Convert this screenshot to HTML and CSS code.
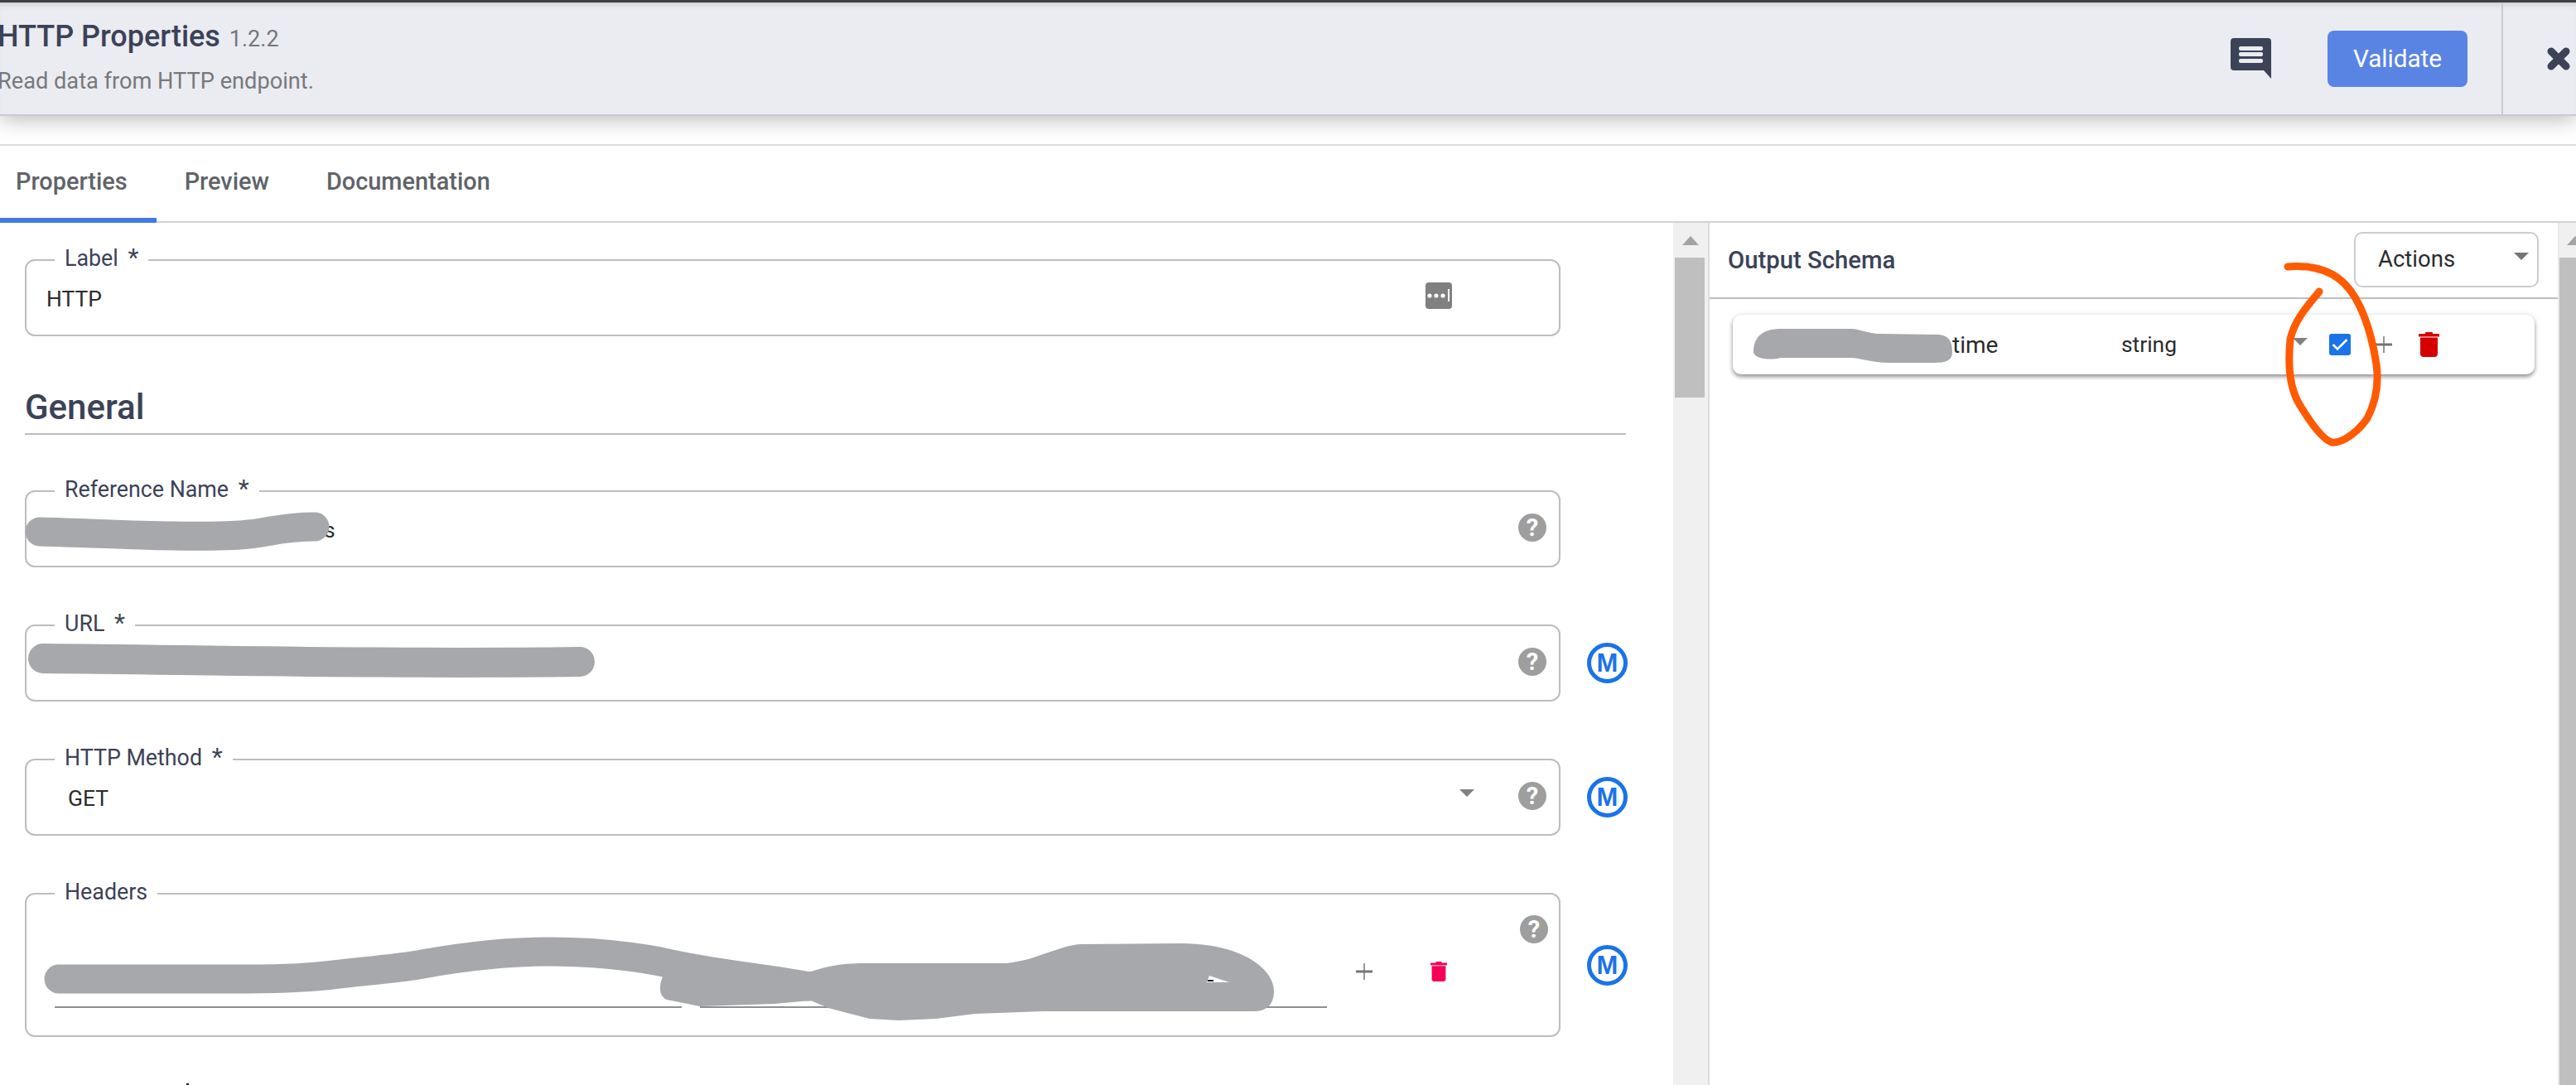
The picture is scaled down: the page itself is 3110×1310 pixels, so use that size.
FILE: index.html
```html
<!DOCTYPE html>
<html>
    <head>
        <title>HTTP Properties</title>
        <link rel="stylesheet" href="styles.css">
    </head>
    <body>
        <div class="header">
            <div class="header-title">
                <div class="title">HTTP Properties <span class="version">1.2.2</span></div>
                <div class="description">Read data from HTTP endpoint.</div>
            </div>
            <svg class="comment-icon" viewBox="0 0 49 49">
                <path d="M4 0H45a4 4 0 0 1 4 4V49L40 39H4a4 4 0 0 1-4-4V4a4 4 0 0 1 4-4z" fill="#3c4257"/>
                <rect x="10" y="10" width="29" height="5" rx="2" fill="#ebecf1"/>
                <rect x="10" y="17" width="29" height="5" rx="2" fill="#ebecf1"/>
                <rect x="10" y="25" width="29" height="5" rx="2" fill="#ebecf1"/>
            </svg>
            <button class="validate">Validate</button>
            <div class="header-divider"></div>
            <svg class="close-icon" viewBox="0 0 28 28">
                <path d="M5 5L23 23M23 5L5 23" stroke="#3c4257" stroke-width="9" stroke-linecap="round"/>
            </svg>
        </div>

        <div class="tabs">
            <div class="tab tab-active">Properties</div>
            <div class="tab">Preview</div>
            <div class="tab">Documentation</div>
        </div>

        <div class="main">
            <div class="form-pane">
                <div class="row">
                    <div class="field">
                        <span class="field-label">Label <i>*</i></span>
                        <span class="value value-label">HTTP</span>
                        <svg class="key-icon" viewBox="0 0 32 32">
                            <rect width="32" height="32" rx="4" fill="#808080"/>
                            <circle cx="5" cy="16" r="2.6" fill="#fff"/>
                            <circle cx="13" cy="16" r="2.6" fill="#fff"/>
                            <circle cx="21" cy="16" r="2.6" fill="#fff"/>
                            <rect x="27" y="8" width="2" height="15" fill="#fff"/>
                        </svg>
                    </div>
                </div>

                <h2 class="section-title">General</h2>

                <div class="row row-first">
                    <div class="field">
                        <span class="field-label">Reference Name <i>*</i></span>
                        <span class="value value-ref">s</span>
                        <span class="help">?</span>
                    </div>
                </div>
                <div class="row">
                    <div class="field">
                        <span class="field-label">URL <i>*</i></span>
                        <span class="value"></span>
                        <span class="help">?</span>
                    </div>
                    <span class="macro">M</span>
                </div>
                <div class="row">
                    <div class="field">
                        <span class="field-label">HTTP Method <i>*</i></span>
                        <span class="value value-select">GET</span>
                        <span class="caret caret-select"></span>
                        <span class="help">?</span>
                    </div>
                    <span class="macro">M</span>
                </div>
                <div class="row">
                    <div class="field field-tall">
                        <span class="field-label">Headers</span>
                        <div class="kv-input"></div>
                        <div class="kv-input"></div>
                        <svg class="plus-icon plus-headers" viewBox="0 0 20 20"><path d="M10 0V20" stroke="#757575" stroke-width="1.5"/><path d="M0 10H20" stroke="#757575" stroke-width="3"/></svg>
                        <svg class="trash-icon trash-pink" viewBox="0 0 25 30">
                            <rect x="8" y="0" width="9" height="3" rx="1"/>
                            <rect x="0" y="2" width="25" height="3.5"/>
                            <path d="M2 6.5H23V26a4 4 0 0 1-4 4H6a4 4 0 0 1-4-4z"/>
                        </svg>
                        <span class="help help-top">?</span>
                    </div>
                    <span class="macro">M</span>
                </div>
            </div>

            <div class="scrollbar">
                <svg class="scroll-arrow" viewBox="0 0 20 11"><path d="M10 0L20 11H0z" fill="#a3a3a3"/></svg>
                <div class="scroll-thumb"></div>
            </div>

            <div class="schema-pane">
                <div class="schema-header">
                    <span class="schema-title">Output Schema</span>
                    <div class="actions">Actions<span class="caret caret-actions"></span></div>
                </div>
                <div class="schema-row">
                    <span class="schema-name">time</span>
                    <span>string</span>
                    <span class="caret caret-row"></span>
                    <svg class="checkbox" viewBox="0 0 26 26">
                        <rect width="26" height="26" rx="3" fill="#1a73e8"/>
                        <path d="M4.5 13L10 18.5L21.5 7" fill="none" stroke="#fff" stroke-width="2.6"/>
                    </svg>
                    <svg class="plus-icon" viewBox="0 0 20 20"><path d="M10 0V20" stroke="#757575" stroke-width="1.5"/><path d="M0 10H20" stroke="#757575" stroke-width="3"/></svg>
                    <svg class="trash-icon trash-red" viewBox="0 0 25 30">
                        <rect x="8" y="0" width="9" height="3" rx="1"/>
                        <rect x="0" y="2" width="25" height="3.5"/>
                        <path d="M2 6.5H23V26a4 4 0 0 1-4 4H6a4 4 0 0 1-4-4z"/>
                    </svg>
                </div>
            </div>

            <div class="scrollbar scrollbar-right">
                <svg class="scroll-arrow" viewBox="0 0 20 11"><path d="M10 0L20 11H0z" fill="#a3a3a3"/></svg>
                <div class="scroll-thumb"></div>
            </div>
        </div>

        <!-- marker scribbles drawn on top of the screenshot -->
        <svg class="scribbles" viewBox="0 0 3110 1310">
            <g fill="none" stroke="#a7a8ab" stroke-linecap="round" stroke-linejoin="round">
                <path stroke-width="35" d="M48 642C130 644 220 650 290 646C325 644 335 636 380 636"/>
                <path stroke-width="36" d="M52 795C260 797 480 802 700 799"/>
                <path stroke-width="35" d="M71 1182H300C350 1182 380 1180 410 1176C450 1171 480 1170 510 1164C560 1155 610 1149 663 1149C720 1149 760 1154 797 1161C860 1176 920 1180 976 1191"/>
            </g>
            <path fill="#a7a8ab" d="M2117 425C2117 405 2130 397 2150 397L2235 397C2245 397 2255 403 2270 403L2340 404C2355 405 2357 415 2357 425C2357 435 2350 438 2335 438L2280 438C2260 438 2245 432 2235 432L2150 432C2135 436 2117 432 2117 425z"/>
            <path fill="#a7a8ab" d="M801 1177C795 1190 795 1202 805 1207L845 1215L935 1212L979 1208L1000 1217L1050 1230L1085 1232L1130 1230L1177 1224L1260 1221H1514C1532 1221 1538 1210 1538 1197C1538 1170 1500 1139 1425 1139L1305 1140C1280 1141 1250 1160 1215 1163H1045C1010 1163 995 1168 979 1173z"/>
            <path fill="#fff" d="M1460 1178L1484 1186H1457z"/>
            <rect x="1458" y="1183" width="7" height="2" fill="#111"/>
            <rect x="225" y="1308" width="3" height="2" fill="#222"/>
            <path fill="none" stroke="#ff5a00" stroke-width="9" stroke-linecap="round" stroke-linejoin="round" d="M2762 322C2790 320 2815 326 2831 343C2850 362 2863 400 2869 440C2873 470 2866 490 2858 505C2848 520 2828 536 2815 534C2803 530 2788 508 2776 488C2764 468 2762 440 2765 410C2770 385 2790 365 2800 352"/>
        </svg>
    </body>
</html>
```

FILE: styles.css
```css
body {
    margin: 0;
    width: 3110px;
    height: 1310px;
    overflow: hidden;
    position: relative;
    background-color: #fff;
    font-family: Roboto, "Liberation Sans", sans-serif;
    font-size: 26.4px;
    color: #2b2b2b;
}

/* header */
.header {
    display: flex;
    align-items: center;
    box-sizing: border-box;
    height: 140px;
    padding-right: 7px;
    border-top: 3px solid #3f3f3f;
    border-bottom: 2px solid #c9cad0;
    background-color: #ebecf1;
    box-shadow: inset 0 8px 8px -6px rgba(0, 0, 0, 0.15), 0 4px 24px rgba(0, 0, 0, 0.28);
    position: relative;
}
.header-title {
    flex: 1;
    margin-left: -3px;
    padding-top: 1px;
    padding-bottom: 3px;
}
.title {
    font-size: 36px;
    font-weight: 500;
    line-height: 40px;
    color: #3c4257;
}
.version {
    margin-left: 2px;
    font-size: 27px;
    font-weight: 400;
    color: #75777c;
}
.description {
    margin-top: 13px;
    font-size: 27.2px;
    line-height: 36px;
    color: #77797d;
}
.comment-icon {
    width: 49px;
    height: 49px;
    margin-right: 68px;
}
.validate {
    width: 169px;
    height: 68px;
    margin-right: 41px;
    border: none;
    border-radius: 8px;
    background-color: #5a84e4;
    color: #fff;
    font-family: Roboto, sans-serif;
    font-size: 29.7px;
}
.header-divider {
    align-self: stretch;
    width: 2px;
    background-color: #c9cad0;
}
.close-icon {
    width: 28px;
    height: 28px;
    margin-left: 53px;
}

/* tabs */
.tabs {
    display: flex;
    box-sizing: border-box;
    height: 95px;
    margin-top: 34px;
    border-top: 2px solid #dcdee0;
    box-shadow: inset 0 -2px 0 #d0d4d8;
}
.tab {
    box-sizing: border-box;
    height: 93px;
    padding: 26px 35px 0 34px;
    font-size: 28.9px;
    font-weight: 500;
    color: #5f6368;
}
.tab-active {
    padding-left: 19px;
    border-bottom: 6px solid #3f7ae8;
}

.main {
    display: flex;
    width: 3152px;
    height: 1041px;
}

/* form */
.form-pane {
    box-sizing: border-box;
    width: 2020px;
    padding: 44px 0 0 30px;
}
.row {
    display: flex;
    align-items: center;
    margin-top: 69px;
}
.row:first-child {
    margin-top: 0;
}
.row-first {
    margin-top: 67px;
}
.field {
    position: relative;
    display: flex;
    align-items: center;
    box-sizing: border-box;
    width: 1854px;
    height: 93px;
    border: 2px solid #bdbdbd;
    border-radius: 12px;
}
.field-tall {
    height: 174px;
    align-items: flex-start;
    padding-left: 34px;
}
.field-label {
    position: absolute;
    top: -19px;
    left: 34px;
    padding: 0 12px;
    background-color: #fff;
    font-size: 26.8px;
    line-height: 32px;
    color: #3c4257;
}
.field-label i {
    margin-left: 5px;
    font-size: 30px;
    font-style: normal;
    line-height: 20px;
}
.value {
    flex: 1;
    padding-left: 24px;
    padding-top: 2px;
}
.value-ref {
    padding-left: 359px;
}
.value-select {
    padding-left: 50px;
}
.key-icon {
    width: 32px;
    height: 32px;
    margin-right: 129px;
    margin-bottom: 6px;
}
.help {
    flex: none;
    width: 34px;
    height: 34px;
    margin: 0 15px 4px 0;
    border-radius: 50%;
    background-color: #9e9e9e;
    color: #fff;
    font-size: 29px;
    font-weight: 700;
    line-height: 34px;
    text-align: center;
}
.help-top {
    margin: 25px 13px 0 auto;
}
.macro {
    flex: none;
    box-sizing: border-box;
    width: 49px;
    height: 49px;
    margin-left: 32px;
    border: 5px solid #1a73e8;
    border-radius: 50%;
    color: #1a73e8;
    font-family: "Liberation Sans", sans-serif;
    font-size: 31px;
    font-weight: 700;
    line-height: 39px;
    text-align: center;
}
.caret {
    width: 0;
    height: 0;
    border-left: 9px solid transparent;
    border-right: 9px solid transparent;
    border-top: 9px solid #808080;
}
.caret-select {
    margin-right: 53px;
    margin-bottom: 10px;
}
.kv-input {
    width: 757px;
    height: 2px;
    margin: 135px 22px 0 0;
    background-color: #8f8f8f;
}
.plus-icon {
    width: 20px;
    height: 20px;
}
.plus-headers {
    margin: 83px 0 0 13px;
}
.trash-icon {
    width: 25px;
    height: 30px;
}
.trash-pink {
    width: 20px;
    height: 26px;
    margin: 80px 0 0 70px;
    fill: #f50057;
}
.trash-red {
    fill: #d50000;
}
.section-title {
    display: flex;
    align-items: flex-end;
    box-sizing: border-box;
    width: 1933px;
    height: 119px;
    margin: 0;
    padding-bottom: 7px;
    border-bottom: 2px solid #bdbdbd;
    font-size: 42px;
    font-weight: 500;
    color: #3c4257;
}

/* scrollbars */
.scrollbar {
    flex: none;
    display: flex;
    flex-direction: column;
    box-sizing: border-box;
    width: 44px;
    padding: 16px 4px 0 2px;
    background-color: #f0f0f0;
    border-right: 2px solid #dcdcdc;
}
.scroll-arrow {
    width: 20px;
    height: 11px;
    margin-left: 9px;
}
.scroll-thumb {
    height: 169px;
    margin-top: 15px;
    background-color: #bfbfbf;
}
.scrollbar-right {
    border-right: none;
    border-left: 2px solid #e8e8e8;
    padding-left: 0;
}
.scrollbar-right .scroll-thumb {
    height: 999px;
}

/* output schema */
.schema-pane {
    flex: none;
    width: 1024px;
}
.schema-header {
    display: flex;
    align-items: center;
    justify-content: space-between;
    box-sizing: border-box;
    height: 92px;
    padding: 0 23px 1px 22px;
    border-bottom: 2px solid #bdbdbd;
}
.schema-title {
    font-size: 29.3px;
    font-weight: 500;
    color: #3c4257;
}
.actions {
    display: flex;
    align-items: center;
    justify-content: space-between;
    box-sizing: border-box;
    width: 223px;
    height: 67px;
    padding: 0 10px 2px 27px;
    border: 2px solid #ccc;
    border-radius: 10px;
    font-size: 27.5px;
}
.caret-actions {
    border-top-color: #757575;
    margin-bottom: 6px;
}
.schema-row {
    display: grid;
    grid-template-columns: 204px 207px 44px 56px 52px auto;
    align-items: center;
    box-sizing: border-box;
    width: 968px;
    height: 72px;
    margin: 19px 0 0 28px;
    padding-left: 265px;
    border-radius: 10px;
    background-color: #fff;
    box-shadow: 0 0 8px rgba(0, 0, 0, 0.08), 0 3px 5px rgba(0, 0, 0, 0.4);
}
.schema-name {
    font-size: 28px;
}
.caret-row {
    margin-bottom: 8px;
}
.checkbox {
    width: 26px;
    height: 26px;
}
.scribbles {
    position: absolute;
    top: 0;
    left: 0;
    width: 3110px;
    height: 1310px;
    pointer-events: none;
}
```
